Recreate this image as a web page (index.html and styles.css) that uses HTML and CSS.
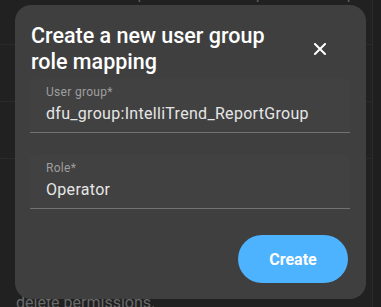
FILE: index.html
```html
<!DOCTYPE html>
<html lang="en">

<head>
  <meta charset="UTF-8">
  <meta name="viewport" content="width=device-width, initial-scale=1.0">
  <title>User group role mapping</title>
  <link rel="stylesheet" href="styles.css">
</head>

<body>
  <div class="page">
    <div class="page-card">
      <p class="page-text page-text-top">user media. This permission is required to use push notifications.</p>
      <div class="page-row"></div>
      <div class="page-row"></div>
      <div class="page-row"></div>
      <p class="page-text page-text-bottom">delete permissions.</p>
    </div>
  </div>

  <div class="dialog" role="dialog">
    <div class="dialog-header">
      <h1 class="dialog-title">Create a new user group role mapping</h1>
      <button class="close-btn" aria-label="Close">
        <svg width="12" height="12" viewBox="0 0 12 12">
          <path d="M1 1 L11 11 M11 1 L1 11" stroke="#fff" stroke-width="2" stroke-linecap="square" />
        </svg>
      </button>
    </div>

    <div class="field">
      <label class="field-label">User group*</label>
      <div class="field-value">dfu_group:IntelliTrend_ReportGroup</div>
    </div>

    <div class="field">
      <label class="field-label">Role*</label>
      <div class="field-value">Operator</div>
    </div>

    <div class="dialog-actions">
      <button class="create-btn">Create</button>
    </div>
  </div>
</body>

</html>
```

FILE: styles.css
```css
html,
body {
  margin: 0;
  padding: 0;
  height: 100%;
}

body {
  font-family: Roboto, 'Noto Sans', sans-serif;
  background-color: #1f1f1f;
  overflow: hidden;
}

.page {
  height: 100%;
  padding-right: 8px;
}

.page-card {
  height: 100%;
  background-color: #212121;
  border-right: 1px solid #2a2a2a;
  display: flex;
  flex-direction: column;
}

.page-text {
  margin: 0;
  padding-left: 16px;
  font-size: 16px;
  line-height: 20px;
  color: #5e5e5e;
  white-space: nowrap;
}

.page-text-top {
  margin-top: -16px;
}

.page-row {
  height: 56px;
  border-top: 1px solid #2a2a2a;
}

.page-row:first-of-type {
  margin-top: 40px;
}

.page-text-bottom {
  margin-top: auto;
  margin-bottom: -6px;
  color: #6a6a6a;
}

.dialog {
  position: absolute;
  left: 15px;
  top: 5px;
  width: 351px;
  height: 294px;
  box-sizing: border-box;
  padding: 18px 18px 16px 15px;
  background-color: #3f3f3f;
  border-radius: 16px;
  display: flex;
  flex-direction: column;
}

.dialog-header {
  display: flex;
  align-items: center;
  padding-left: 1px;
  margin-bottom: 4px;
}

.dialog-title {
  flex: 1;
  max-width: 250px;
  margin: 0 auto 0 0;
  font-size: 21.5px;
  line-height: 26px;
  font-weight: 500;
  color: #fff;
}

.close-btn {
  background: none;
  border: none;
  padding: 0;
  width: 12px;
  height: 12px;
  margin-right: 22px;
  display: flex;
  cursor: pointer;
}

.field {
  display: flex;
  flex-direction: column;
  width: 320px;
  box-sizing: border-box;
  padding: 6px 16px 8px;
  background-color: #414141;
  border-radius: 4px 4px 0 0;
  border-bottom: 1px solid #727272;
  margin-bottom: 22px;
}

.field-label {
  font-size: 12px;
  line-height: 14px;
  letter-spacing: 0.3px;
  color: #9e9e9e;
}

.field-value {
  margin-top: 5px;
  font-size: 16px;
  line-height: 20px;
  letter-spacing: 0.3px;
  color: #e6e6e6;
  white-space: nowrap;
}

.dialog-actions {
  margin-top: auto;
  display: flex;
  justify-content: flex-end;
}

.create-btn {
  width: 110px;
  height: 48px;
  border: none;
  border-radius: 24px;
  background-color: #4db3fe;
  color: #fff;
  font-family: Roboto, sans-serif;
  font-size: 16px;
  font-weight: 700;
  cursor: pointer;
}
```
